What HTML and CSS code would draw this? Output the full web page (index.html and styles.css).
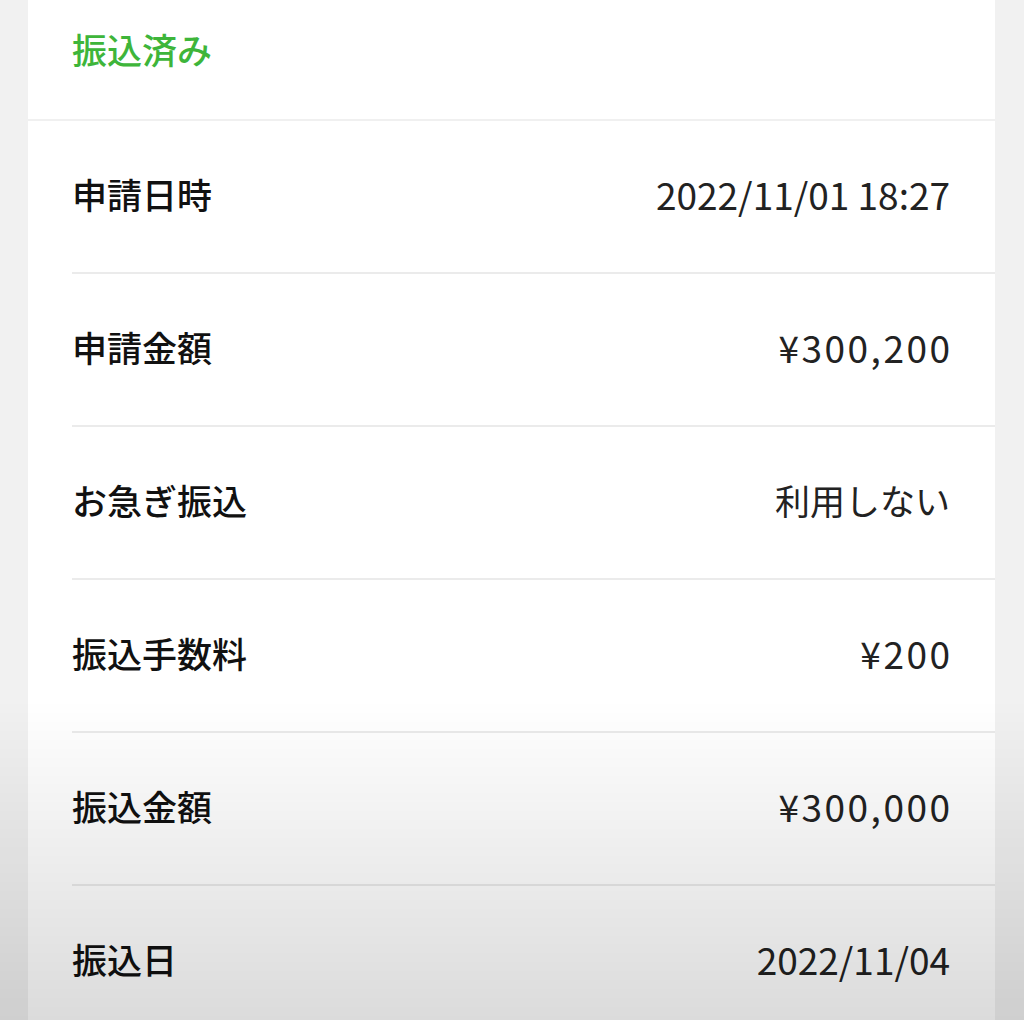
FILE: index.html
```html
<!DOCTYPE html>
<html lang="ja">
<head>
    <meta charset="UTF-8">
    <meta name="viewport" content="width=device-width, initial-scale=1.0">
    <title>振込申請の詳細</title>
    <link rel="stylesheet" href="styles.css">
</head>
<body>
    <div class="detail-card">
        <div class="status-head">振込済み</div>

        <div class="detail-row">
            <span class="detail-label">申請日時</span>
            <span class="detail-value is-date">2022/11/01 18:27</span>
        </div>
        <div class="detail-row">
            <span class="detail-label">申請金額</span>
            <span class="detail-value is-money">¥300,200</span>
        </div>
        <div class="detail-row">
            <span class="detail-label">お急ぎ振込</span>
            <span class="detail-value">利用しない</span>
        </div>
        <div class="detail-row">
            <span class="detail-label">振込手数料</span>
            <span class="detail-value is-money">¥200</span>
        </div>
        <div class="detail-row">
            <span class="detail-label">振込金額</span>
            <span class="detail-value is-money">¥300,000</span>
        </div>
        <div class="detail-row">
            <span class="detail-label">振込日</span>
            <span class="detail-value is-date">2022/11/04</span>
        </div>
    </div>

    <!-- darker bottom edge of the video frame -->
    <div class="shade"></div>
</body>
</html>
```

FILE: styles.css
```css
body {
    margin: 0;
    height: 1020px;
    overflow: hidden;
    background-color: #f1f1f1;
    font-family: "Noto Sans CJK JP", "Noto Sans", sans-serif;
    color: #1a1a1a;
}
.detail-card {
    margin-left: 28px;
    width: 967px;
    background: #fff;
}
.status-head {
    height: 121px;
    box-sizing: border-box;
    padding: 27px 0 0 44px;
    font-size: 35px;
    line-height: 44px;
    font-weight: 500;
    color: #3eb53a;
    border-bottom: 2px solid #f0f0f0;
}
.detail-row {
    display: flex;
    justify-content: space-between;
    align-items: center;
    box-sizing: border-box;
    height: 153px;
    margin-left: 44px;
    padding: 0 45px 6px 0;
    border-bottom: 2px solid #ebebeb;
}
.detail-label {
    font-size: 35px;
    font-weight: 500;
    color: #111;
}
.detail-value {
    font-size: 35px;
    font-weight: 400;
    color: #222;
}
.detail-value.is-date {
    font-size: 37px;
}
.detail-value.is-money {
    font-size: 37px;
    letter-spacing: 2.5px;
    margin-right: -2.5px;
}
.shade {
    position: fixed;
    left: 0;
    right: 0;
    top: 700px;
    bottom: 0;
    pointer-events: none;
    background: linear-gradient(to bottom, rgba(0, 0, 0, 0), rgba(0, 0, 0, 0.14));
}
```
